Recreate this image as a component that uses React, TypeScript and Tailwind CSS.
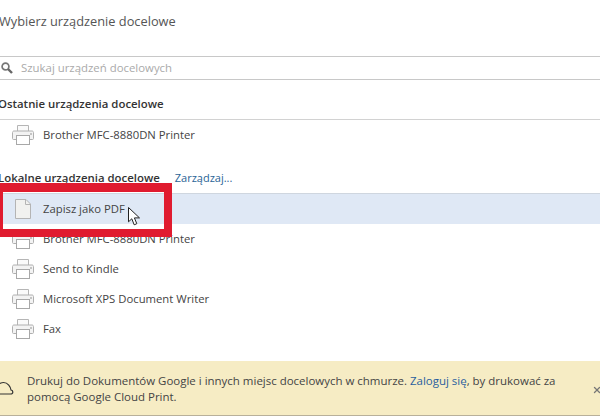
import { X } from "lucide-react";

const font = { fontFamily: '"Open Sans", sans-serif' };

function PrinterIcon() {
  return (
    <svg width="22" height="20" viewBox="0 0 22 20" fill="none" className="shrink-0">
      <path d="M5.5 6V0.5H16.5V6" stroke="#b5b5b5" fill="#fafafa" />
      <path d="M4.5 14.5H1.5C0.9 14.5 0.5 14.1 0.5 13.5V7.5C0.5 6.7 1.1 6 2 6H20C20.9 6 21.5 6.7 21.5 7.5V13.5C21.5 14.1 21.1 14.5 20.5 14.5H17.5" stroke="#b0b0b0" fill="#f3f3f3" />
      <rect x="4.5" y="10.5" width="13" height="9" fill="#fff" stroke="#a8a8a8" />
      <rect x="18" y="8" width="2" height="2" fill="#c4c4c4" />
    </svg>
  );
}

function PageIcon() {
  return (
    <svg width="16" height="20" viewBox="0 0 16 20" fill="none" className="shrink-0">
      <path d="M0.5 0.5H11L15.5 5V19.5H0.5Z" fill="#f1f1ef" stroke="#b4b4b4" />
      <path d="M10.5 0.5V5.5H15.5" stroke="#b4b4b4" />
    </svg>
  );
}

function SearchIcon() {
  return (
    <svg width="12" height="12" viewBox="0 0 12 12" fill="none" className="shrink-0">
      <circle cx="4.5" cy="4.5" r="3.4" stroke="#777" strokeWidth="1.7" />
      <path d="M7 7L11 11" stroke="#666" strokeWidth="2.4" />
    </svg>
  );
}

function Cursor() {
  return (
    <svg width="13" height="19" viewBox="0 0 13 19" className="absolute left-[128px] top-[207px]">
      <path d="M0.5 0.5V14.8L3.8 11.8L6.2 17.8L8.8 16.7L6.4 10.9H11.5Z" fill="#fff" stroke="#222" strokeWidth="1" />
    </svg>
  );
}

function DeviceRow({ name }: { name: string }) {
  return (
    <div className="flex h-[30px] items-center gap-[9px] pl-[12px] text-[11.3px] text-[#444]">
      <PrinterIcon />
      <span>{name}</span>
    </div>
  );
}

export default function App() {
  return (
    <div className="relative flex h-[417px] w-[600px] flex-col overflow-hidden bg-white" style={font}>
      <h1 className="-ml-[1px] mt-[10px] h-[46px] text-[12.8px] leading-[22px] font-normal text-[#555]">
        Wybierz urządzenie docelowe
      </h1>
      <div className="flex h-[24px] items-center gap-[8px] border-y border-[#c8c8c8] pl-[1px] text-[11.4px] text-[#aaa]">
        <SearchIcon />
        <span>Szukaj urządzeń docelowych</span>
      </div>
      <div className="-ml-[2px] mt-[16px] h-[23px] text-[11.4px] leading-[16px] font-semibold whitespace-nowrap text-[#333]">
        Ostatnie urządzenia docelowe
      </div>
      <div className="border-t border-[#d2d2d2]">
        <DeviceRow name="Brother MFC-8880DN Printer" />
      </div>
      <div className="-ml-[2px] mt-[20px] flex h-[23px] gap-[15px] text-[11.4px] leading-[16px] whitespace-nowrap">
        <span className="font-semibold text-[#333]">Lokalne urządzenia docelowe</span>
        <span className="text-[11px] text-[#2a6496]">Zarządzaj...</span>
      </div>
      <div className="flex h-[31px] items-center gap-[12px] border-t border-[#cfd6df] bg-[#dfe8f5] pl-[15px] text-[11.3px] text-[#444]">
        <PageIcon />
        <span>Zapisz jako PDF</span>
      </div>
      <DeviceRow name="Brother MFC-8880DN Printer" />
      <DeviceRow name="Send to Kindle" />
      <DeviceRow name="Microsoft XPS Document Writer" />
      <DeviceRow name="Fax" />
      <div className="mt-[17px] flex h-[55px] items-center border-b border-[#b8b09a] bg-[#f6ecc4] text-[11.47px] leading-[16px] text-[#444]">
        <svg width="14" height="14" viewBox="0 0 14 14" fill="none" className="shrink-0">
          <path d="M-3 13H10.5C13.5 13 13.5 9.5 11 9C10.5 6 8 1.5 3.5 1.5C1 1.5 -1 3 -3 4" stroke="#333" strokeWidth="1.2" />
        </svg>
        <p className="ml-[13px] w-[534px] shrink-0 pt-[2px]">
          Drukuj do Dokumentów Google i innych miejsc docelowych w chmurze.{" "}
          <span className="text-[#2a5f9e]">Zaloguj się</span>, by drukować za pomocą Google Cloud Print.
        </p>
        <X size={10} strokeWidth={3} className="ml-[31px] mt-[3px] shrink-0 text-[#777]" />
      </div>
      <div className="absolute left-[-5px] top-[183px] h-[54px] w-[177px] border-[8px] border-t-[9px] border-[#e01b2f]" />
      <Cursor />
    </div>
  );
}
